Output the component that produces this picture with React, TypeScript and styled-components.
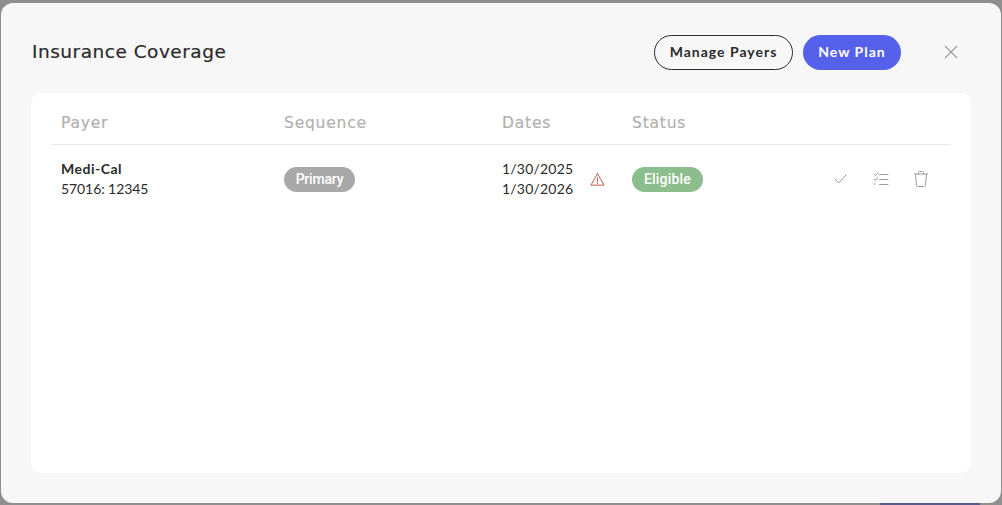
import React from "react";
import styled, { createGlobalStyle } from "styled-components";

const Global = createGlobalStyle`
  html, body { margin: 0; padding: 0; height: 100%; background: #8f8f8f; overflow: hidden; }
  body { font-family: "Inter", "Liberation Sans", sans-serif; }
`;

const Backdrop = styled.div`
  width: 1002px;
  height: 505px;
  padding: 3px 1px 2px 1px;
  box-sizing: border-box;
  background: #8f8f8f;
  position: relative;
`;

const Peek = styled.div`
  position: absolute;
  left: 880px;
  bottom: 0;
  width: 100px;
  height: 3px;
  background: #5a5a8c;
`;

const Modal = styled.section`
  position: relative;
  z-index: 1;
  height: 500px;
  box-sizing: border-box;
  background: #f7f7f7;
  border-radius: 12px;
  padding: 32px 30px 30px;
  display: flex;
  flex-direction: column;
`;

const Header = styled.header`
  height: 35px;
  display: flex;
  align-items: center;
  margin-bottom: 23px;
`;

const Title = styled.h1`
  margin: -2px 0 0 1px;
  flex: 1;
  font-family: "DejaVu Sans", sans-serif;
  font-size: 18.5px;
  font-weight: 400;
  color: #2b2b2b;
  letter-spacing: 0.5px;
  -webkit-text-stroke: 0.2px #2b2b2b;
`;

const Button = styled.button<{ $primary?: boolean }>`
  height: 35px;
  box-sizing: border-box;
  border-radius: 18px;
  font-family: "Lato", sans-serif;
  font-size: 14px;
  font-weight: 700;
  letter-spacing: 1px;
  padding: 0 0 2px;
  width: ${(p) => (p.$primary ? "98px" : "139px")};
  color: ${(p) => (p.$primary ? "#ffffff" : "#2b2b2b")};
  background: ${(p) => (p.$primary ? "#5561ea" : "transparent")};
  border: ${(p) => (p.$primary ? "none" : "1px solid #2b2b2b")};
  margin-left: ${(p) => (p.$primary ? "10px" : "0")};
`;

const Close = styled.span`
  display: flex;
  align-items: center;
  justify-content: center;
  width: 14px;
  height: 14px;
  margin: -2px 13px 0 43px;
`;

const Card = styled.div`
  flex: 1;
  background: #ffffff;
  border-radius: 10px;
  padding: 0 20px;
`;

const Row = styled.div<{ $head?: boolean }>`
  display: grid;
  grid-template-columns: 223px 218px 130px 1fr;
  padding-left: 10px;
  height: ${(p) => (p.$head ? "51px" : "68px")};
  align-items: center;
  ${(p) => (p.$head ? "border-bottom: 1px solid #e9e9e9;" : "")}
`;

const HeadCell = styled.div`
  font-family: "DejaVu Sans", sans-serif;
  font-size: 15.5px;
  color: #b2b0b0;
  letter-spacing: 0.8px;
  -webkit-text-stroke: 0.2px #b2b0b0;
  margin-top: 9px;
`;

const Stack = styled.div<{ $tight?: boolean }>`
  font-family: "Lato", sans-serif;
  font-size: 14px;
  line-height: 20px;
  color: #2b2b2b;
  letter-spacing: ${(p) => (p.$tight ? "-0.08px" : "0.2px")};
`;

const Strong = styled.div`
  font-weight: 700;
  letter-spacing: 0.5px;
`;

const DateCell = styled.div`
  display: flex;
  align-items: center;
  gap: 17px;
`;

const Pill = styled.span<{ $color: string; $spacing: number }>`
  display: inline-flex;
  align-items: center;
  justify-content: center;
  height: 25px;
  width: 71px;
  border-radius: 13px;
  background: ${(p) => p.$color};
  color: #ffffff;
  font-family: "Roboto", sans-serif;
  font-weight: 500;
  font-size: 14px;
  letter-spacing: ${(p) => p.$spacing}px;
`;

const StatusCell = styled.div`
  display: flex;
  align-items: center;
  justify-content: space-between;
`;

const Actions = styled.div`
  display: flex;
  gap: 20px;
  margin-right: 20px;
`;

const IconBox = styled.span`
  width: 20px;
  height: 20px;
  display: flex;
  align-items: center;
  justify-content: center;
`;

const Ic = ({ children }: { children: React.ReactNode }) => (
  <svg width="20" height="20" viewBox="0 0 20 20" fill="none" stroke="#9c9c9c" strokeWidth="1" strokeLinecap="round" strokeLinejoin="round">
    {children}
  </svg>
);

export default function App() {
  return (
    <>
      <Global />
      <Backdrop>
        <Peek />
        <Modal>
          <Header>
            <Title>Insurance Coverage</Title>
            <Button>Manage Payers</Button>
            <Button $primary>New Plan</Button>
            <Close>
              <svg width="14" height="14" viewBox="0 0 14 14" stroke="#9f9f9f" strokeWidth="1.2" fill="none">
                <path d="M1 1L13 13M13 1L1 13" />
              </svg>
            </Close>
          </Header>
          <Card>
            <Row $head>
              <HeadCell>Payer</HeadCell>
              <HeadCell>Sequence</HeadCell>
              <HeadCell>Dates</HeadCell>
              <HeadCell>Status</HeadCell>
            </Row>
            <Row>
              <Stack $tight>
                <Strong>Medi-Cal</Strong>
                <div>57016: 12345</div>
              </Stack>
              <div>
                <Pill $color="#a9a9a9" $spacing={-0.2}>Primary</Pill>
              </div>
              <DateCell>
                <Stack>
                  <div>1/30/2025</div>
                  <div>1/30/2026</div>
                </Stack>
                <svg width="15" height="15" viewBox="0 0 16 16" fill="none" stroke="#c0553f" strokeWidth="1" strokeLinejoin="round" strokeLinecap="round">
                  <path d="M8 1.8L15 14H1L8 1.8Z" />
                  <path d="M8 6.2V10" />
                  <path d="M8 11.6V12.2" />
                </svg>
              </DateCell>
              <StatusCell>
                <Pill $color="#8cbd8c" $spacing={0.2}>Eligible</Pill>
                <Actions>
                  <IconBox>
                    <Ic><path d="M4 10L7.7 14L15 6" /></Ic>
                  </IconBox>
                  <IconBox>
                    <Ic>
                      <path d="M3 5L4.5 6.5L7 3.5M3 10L4.5 11.5L7 8.5M3.2 15H4.4" />
                      <path d="M8.5 5.5H17M8.5 10.5H17M8.5 15.5H17" />
                    </Ic>
                  </IconBox>
                  <IconBox>
                    <Ic>
                      <path d="M3.5 5H16.5M4.5 5L5.5 16.5C5.6 17.4 6.2 17.5 7 17.5H13C13.8 17.5 14.4 17.4 14.5 16.5L15.5 5" />
                      <path d="M7.5 5V3.5C7.5 3 7.8 2.5 8.3 2.5H11.7C12.2 2.5 12.5 3 12.5 3.5V5" />
                    </Ic>
                  </IconBox>
                </Actions>
              </StatusCell>
            </Row>
          </Card>
        </Modal>
      </Backdrop>
    </>
  );
}
